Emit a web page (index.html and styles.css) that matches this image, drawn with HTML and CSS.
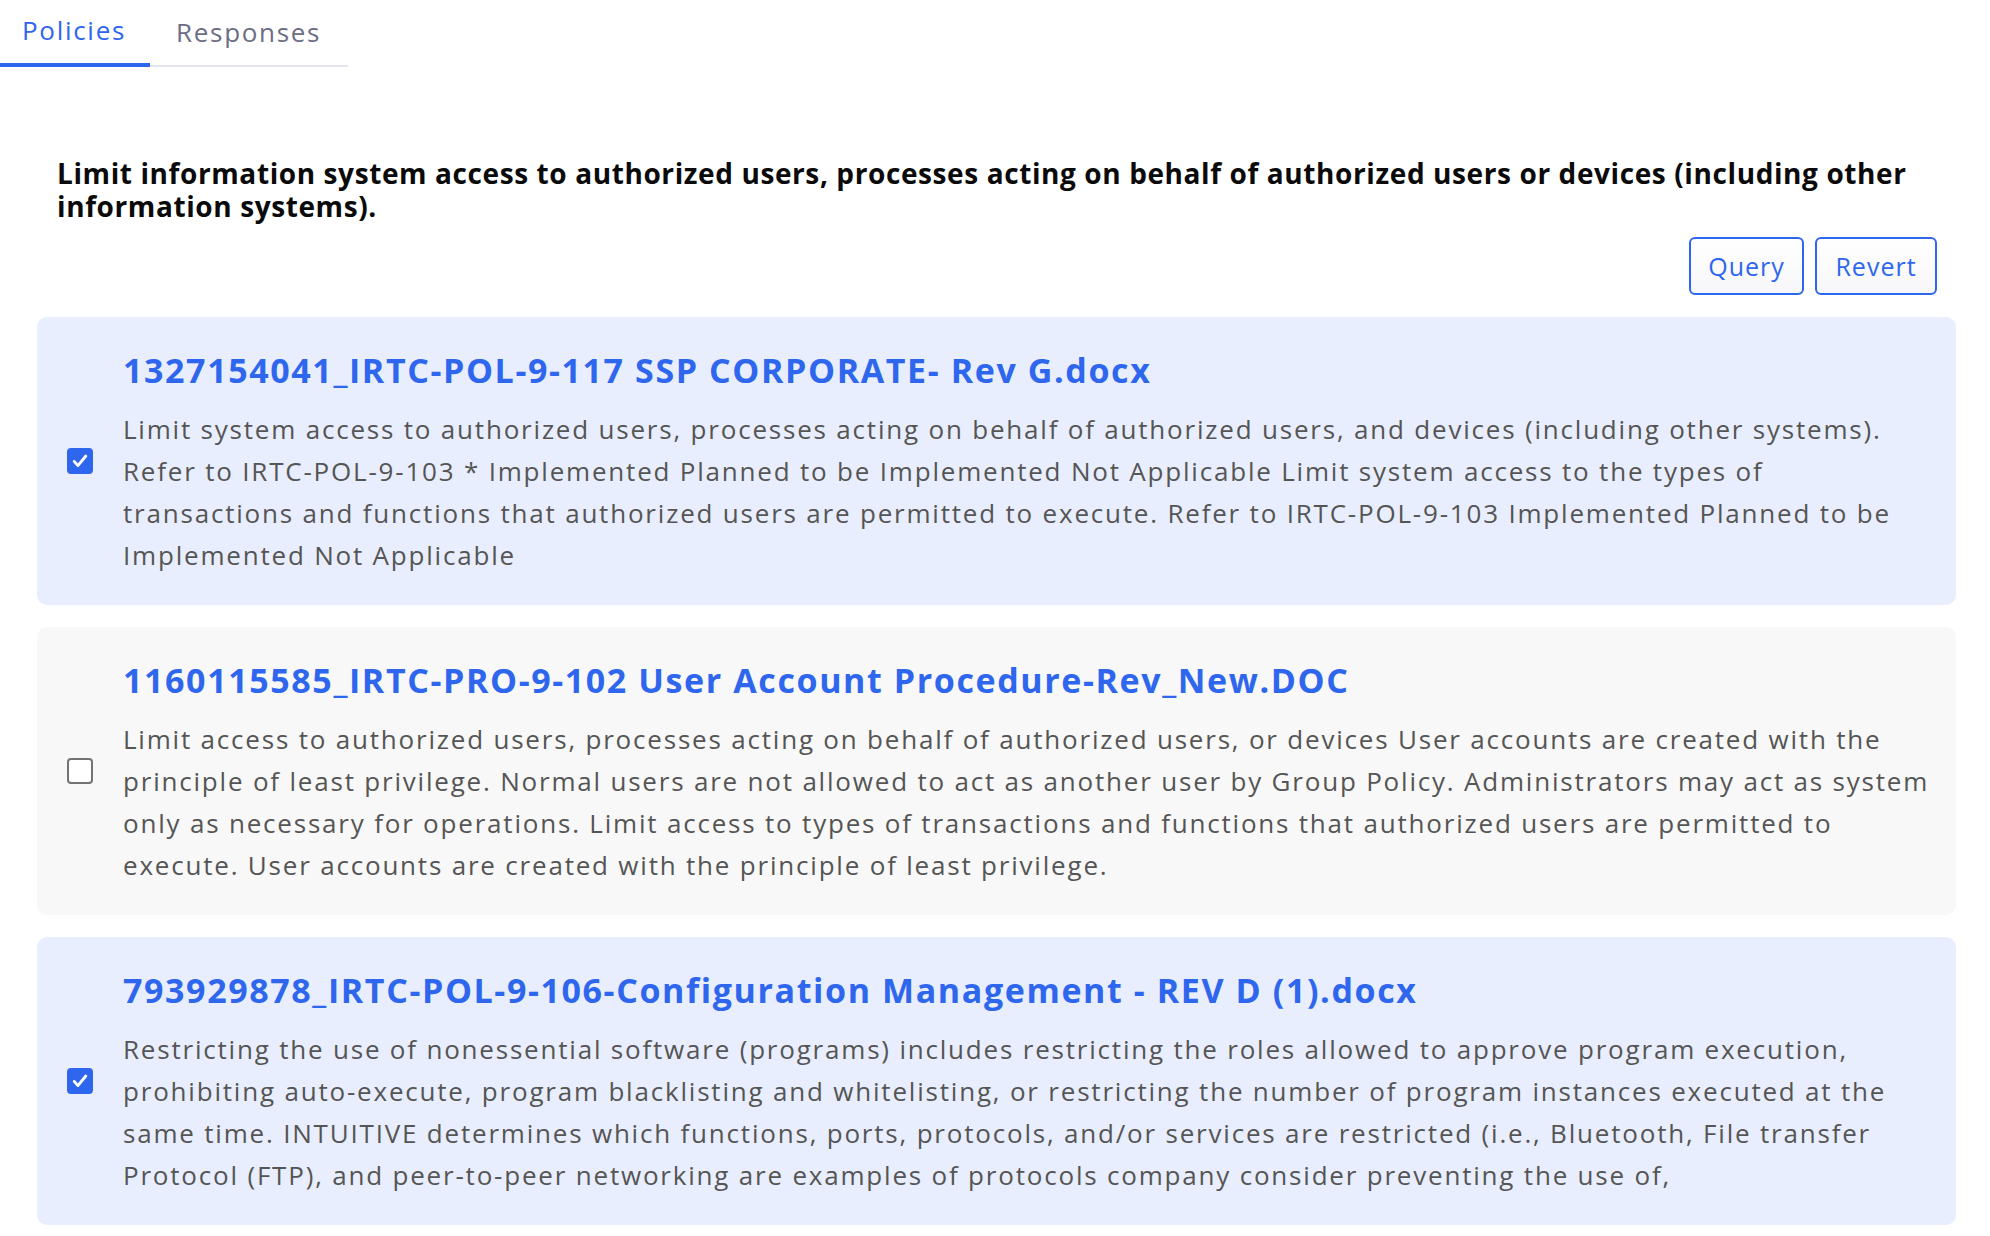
FILE: index.html
```html
<!DOCTYPE html>
<html lang="en">
<head>
<meta charset="utf-8">
<title>Policies</title>
<link rel="stylesheet" href="styles.css">
</head>
<body>
<div class="tabs">
  <div class="tab active">Policies</div>
  <div class="tab">Responses</div>
</div>
<main class="content">
  <section class="intro">
    <h2 class="requirement">Limit information system access to authorized users, processes acting on behalf of authorized users or devices (including other information systems).</h2>
    <div class="actions">
      <button class="btn btn-query">Query</button>
      <button class="btn btn-revert">Revert</button>
    </div>
  </section>
  <div class="cards">
    <div class="card selected">
      <div class="check-col"><span class="checkbox checked"><svg viewBox="0 0 24 24" width="20" height="20"><path d="M5 12.5l4.5 5L19 6" fill="none" stroke="#fff" stroke-width="3.4" stroke-linecap="round" stroke-linejoin="round"/></svg></span></div>
      <div class="card-body">
        <div class="card-title">1327154041_IRTC-POL-9-117 SSP CORPORATE- Rev G.docx</div>
        <p class="card-text">Limit system access to authorized users, processes acting on behalf of authorized users, and devices (including other systems). Refer to IRTC-POL-9-103 * Implemented Planned to be Implemented Not Applicable Limit system access to the types of transactions and functions that authorized users are permitted to execute. Refer to IRTC-POL-9-103 Implemented Planned to be Implemented Not Applicable</p>
      </div>
    </div>
    <div class="card">
      <div class="check-col"><span class="checkbox"></span></div>
      <div class="card-body">
        <div class="card-title">1160115585_IRTC-PRO-9-102 User Account Procedure-Rev_New.DOC</div>
        <p class="card-text">Limit access to authorized users, processes acting on behalf of authorized users, or devices User accounts are created with the principle of least privilege. Normal users are not allowed to act as another user by Group Policy. Administrators may act as system only as necessary for operations. Limit access to types of transactions and functions that authorized users are permitted to execute. User accounts are created with the principle of least privilege.</p>
      </div>
    </div>
    <div class="card selected">
      <div class="check-col"><span class="checkbox checked"><svg viewBox="0 0 24 24" width="20" height="20"><path d="M5 12.5l4.5 5L19 6" fill="none" stroke="#fff" stroke-width="3.4" stroke-linecap="round" stroke-linejoin="round"/></svg></span></div>
      <div class="card-body">
        <div class="card-title">793929878_IRTC-POL-9-106-Configuration Management - REV D (1).docx</div>
        <p class="card-text">Restricting the use of nonessential software (programs) includes restricting the roles allowed to approve program execution, prohibiting auto-execute, program blacklisting and whitelisting, or restricting the number of program instances executed at the same time. INTUITIVE determines which functions, ports, protocols, and/or services are restricted (i.e., Bluetooth, File transfer Protocol (FTP), and peer-to-peer networking are examples of protocols company consider preventing the use of,</p>
      </div>
    </div>
  </div>
</main>
</body>
</html>
```

FILE: styles.css
```css
* { box-sizing: border-box; }
html, body { margin: 0; padding: 0; background: #fff; }
body {
  font-family: "Open Sans", "Liberation Sans", sans-serif;
  color: #111;
}
.tabs {
  display: flex;
  width: 348px;
  border-bottom: 2px solid #e4e4ec;
}
.tab {
  height: 65px;
  padding: 14px 0 0 26px;
  font-size: 26px;
  line-height: 36px;
  letter-spacing: 1.7px;
  color: #6b6d85;
}
.tab.active {
  flex: 0 0 150px;
  padding-left: 22px;
  color: #2f66ee;
  border-bottom: 4px solid #2f66ee;
  margin-bottom: -2px;
  height: 67px;
  padding-top: 12px;
}
.content {
  padding: 90px 34px 40px 37px;
}
.intro { padding: 0 19px 0 20px; }
.requirement {
  margin: 0;
  font-size: 28px;
  line-height: 33px;
  letter-spacing: 0.6px;
  font-weight: 700;
  color: #0a0a0a;
}
.actions {
  display: flex;
  justify-content: flex-end;
  gap: 11px;
  margin-top: 14px;
}
.btn {
  font-family: inherit;
  font-size: 25px;
  letter-spacing: 1px;
  height: 58px;
  padding: 0;
  color: #2f66ee;
  background: linear-gradient(#fff, #f7f7f9);
  border: 2px solid #2f66ee;
  border-radius: 6px;
}
.btn-query { width: 115px; }
.btn-revert { width: 122px; }
.cards {
  display: flex;
  flex-direction: column;
  gap: 22px;
  margin-top: 22px;
}
.card {
  display: flex;
  align-items: center;
  background: #f8f8f8;
  border-radius: 10px;
  padding: 28px 24px 29px 30px;
}
.card.selected { background: #e8eefd; }
.check-col { flex: 0 0 56px; display: flex; align-items: center; }
.checkbox {
  width: 26px;
  height: 26px;
  border: 2px solid #737373;
  border-radius: 4px;
  background: #fff;
  display: flex;
  align-items: center;
  justify-content: center;
}
.checkbox.checked { background: #2f66ee; border-color: #2f66ee; }
.card-body { flex: 1; min-width: 0; }
.card-title {
  font-size: 34px;
  line-height: 51px;
  letter-spacing: 1.6px;
  font-weight: 700;
  color: #2f66ee;
  margin-bottom: 12px;
}
.card-text {
  margin: 0;
  font-size: 26px;
  line-height: 42px;
  letter-spacing: 1.8px;
  color: #555;
}
```
